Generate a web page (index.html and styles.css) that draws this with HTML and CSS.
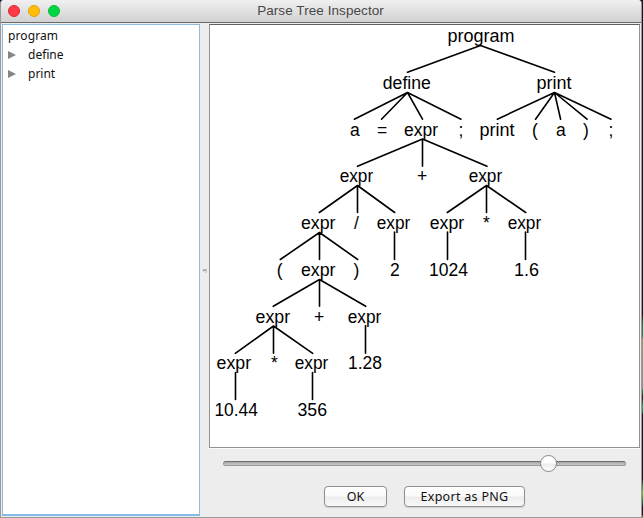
FILE: index.html
```html
<!DOCTYPE html>
<html lang="en">
<head>
<meta charset="utf-8">
<title>Parse Tree Inspector</title>
<link rel="stylesheet" href="styles.css">
</head>
<body>
<div class="window">
  <header class="titlebar">
    <div class="lights"><i class="light close"></i><i class="light minimize"></i><i class="light zoom"></i></div>
    <h1 class="title">Parse Tree Inspector</h1>
  </header>
  <main class="content">
    <nav class="outline">
      <div class="row root">program</div>
      <div class="row"><i class="arrow"></i><span>define</span></div>
      <div class="row"><i class="arrow"></i><span>print</span></div>
    </nav>
    <div class="divider"><svg width="6" height="6" viewBox="0 0 6 6"><path d="M1 3Q1.5 1.5 4.5 2" fill="none" stroke="#888" stroke-width="1.3"/><path d="M3 4.5L5 3.5" stroke="#bbb"/></svg></div>
    <section class="side">
      <div class="canvas">
        <svg width="429" height="421" viewBox="210 26 429 421">
          <g class="edges">
            <path d="M407.5 72.2L480.5 45.5L554.5 72.2"/>
            <path d="M354.3 119.2L407.5 92.5L381.5 119.2M407.5 92.5L422.5 119.2M407.5 92.5L461 119.2"/>
            <path d="M497.3 119.2L554.5 92.5L535.5 119.2M554.5 92.5L560.6 119.2M554.5 92.5L587 119.2M554.5 92.5L611 119.2"/>
            <path d="M357.5 166.3L422.5 139V166.3M422.5 139L487 166.3"/>
            <path d="M319.3 212.5L357.5 185.5V212.5M357.5 185.5L394.7 212.5"/>
            <path d="M447.3 212.5L486.5 185.5V212.5M486.5 185.5L525.7 212.5"/>
            <path d="M280.3 259.5L319.5 232.5V259.5M319.5 232.5L357.7 259.5M394.5 232V259.5M447.5 232V259.5M525.5 232V259.5"/>
            <path d="M273.3 306.3L319.5 279.5V306.3M319.5 279.5L365.7 306.3"/>
            <path d="M235.3 353.3L273.5 326V353.3M273.5 326L312.7 353.3M365.5 325.5V353.3M235.5 372.5V399.5M312.5 372.5V399.5"/>
          </g>
          <g class="labels">
            <text x="447.4" y="42" textLength="67" lengthAdjust="spacingAndGlyphs">program</text>
            <text x="382.8" y="89" textLength="48" lengthAdjust="spacingAndGlyphs">define</text>
            <text x="536.5" y="89" textLength="35" lengthAdjust="spacingAndGlyphs">print</text>
            <text x="350" y="136">a</text>
            <text x="377" y="136">=</text>
            <text x="404" y="136" textLength="34" lengthAdjust="spacingAndGlyphs">expr</text>
            <text x="458.4" y="136">;</text>
            <text x="479.5" y="136" textLength="35" lengthAdjust="spacingAndGlyphs">print</text>
            <text x="532" y="136">(</text>
            <text x="556" y="136">a</text>
            <text x="583" y="136">)</text>
            <text x="608.5" y="136">;</text>
            <text x="339.7" y="182" textLength="33.5" lengthAdjust="spacingAndGlyphs">expr</text>
            <text x="417" y="182">+</text>
            <text x="468.7" y="182" textLength="33.5" lengthAdjust="spacingAndGlyphs">expr</text>
            <text x="301" y="229" textLength="34.5" lengthAdjust="spacingAndGlyphs">expr</text>
            <text x="354" y="229">/</text>
            <text x="376.8" y="229" textLength="33.5" lengthAdjust="spacingAndGlyphs">expr</text>
            <text x="429.7" y="229" textLength="34.5" lengthAdjust="spacingAndGlyphs">expr</text>
            <text x="483" y="229">*</text>
            <text x="507.7" y="229" textLength="33.5" lengthAdjust="spacingAndGlyphs">expr</text>
            <text x="276.8" y="276">(</text>
            <text x="301" y="276" textLength="34.5" lengthAdjust="spacingAndGlyphs">expr</text>
            <text x="353.5" y="276">)</text>
            <text x="390" y="276">2</text>
            <text x="429" y="276" textLength="39" lengthAdjust="spacingAndGlyphs">1024</text>
            <text x="514" y="276" textLength="25" lengthAdjust="spacingAndGlyphs">1.6</text>
            <text x="255.6" y="323" textLength="34.5" lengthAdjust="spacingAndGlyphs">expr</text>
            <text x="314" y="323">+</text>
            <text x="347.8" y="323" textLength="33.5" lengthAdjust="spacingAndGlyphs">expr</text>
            <text x="216.6" y="369" textLength="34.5" lengthAdjust="spacingAndGlyphs">expr</text>
            <text x="271" y="369">*</text>
            <text x="294.8" y="369" textLength="33.5" lengthAdjust="spacingAndGlyphs">expr</text>
            <text x="348" y="369" textLength="34" lengthAdjust="spacingAndGlyphs">1.28</text>
            <text x="214.4" y="416" textLength="43.5" lengthAdjust="spacingAndGlyphs">10.44</text>
            <text x="297.5" y="416" textLength="29.5" lengthAdjust="spacingAndGlyphs">356</text>
          </g>
        </svg>
      </div>
      <div class="slider"><i class="knob"></i></div>
      <div class="buttons"><button class="ok">OK</button><button class="export">Export as PNG</button></div>
    </section>
  </main>
</div>
<div class="desktop"></div>
</body>
</html>
```
FILE: styles.css
```css
* { box-sizing: border-box; }
body {
  margin: 0;
  width: 643px;
  height: 518px;
  display: flex;
  overflow: hidden;
  background: #1b1724;
  font: 12px "Noto Sans", "Open Sans", sans-serif;
  color: #111;
}
.window {
  width: 642px;
  height: 518px;
  display: flex;
  flex-direction: column;
  background: #ededed;
  border: solid #999;
  border-width: 0 1px 1px;
  border-radius: 4px 4px 0 0;
  overflow: hidden;
}
.titlebar {
  height: 23px;
  flex: none;
  display: grid;
  grid-template-columns: 70px 1fr 71px;
  align-items: center;
  background: linear-gradient(#f0f0f0, #d1d1d1);
  border-bottom: 1px solid #696969;
}
.lights { display: flex; gap: 8px; padding-left: 7px; }
.light { width: 12px; height: 12px; border-radius: 50%; border: 1px solid; }
.close { background: #ff3b47; border-color: #e02735; }
.minimize { background: #ffbd08; border-color: #e2a20d; }
.zoom { background: #00d742; border-color: #10b935; }
.title {
  margin: 0;
  text-align: center;
  font: 13.5px/22px "Liberation Sans", Arial, sans-serif;
  letter-spacing: .07px;
  color: #484848;
}
.content { display: flex; height: 494px; padding: 1px 1px 0; }
.outline {
  width: 198px;
  height: 492px;
  background: #fff;
  border: 1px solid #8bbce3;
  border-bottom: 2px solid #83bce8;
  padding: 1px 0 0 5px;
}
.row { height: 19px; display: flex; align-items: center; }
.root { letter-spacing: .1px; }
.arrow {
  width: 0;
  height: 0;
  border: solid transparent;
  border-width: 4.5px 0 4.5px 8px;
  border-left-color: #858585;
  margin-right: 12px;
}
.divider { width: 9px; display: flex; align-items: center; justify-content: center; }
.side { width: 431px; }
.canvas {
  height: 424px;
  background: #fff;
  border: 1px solid #929292;
  border-top: 1px solid #606060;
  box-shadow: 0 1px #fafafa;
}
.canvas svg { display: block; margin-top: 1px; }
.edges { fill: none; stroke: #000; stroke-width: 1.6; stroke-linecap: round; stroke-linejoin: round; }
.labels { font: 17.5px "Liberation Sans", Arial, sans-serif; fill: #000; }
.slider {
  display: flex;
  align-items: center;
  width: 403px;
  height: 5px;
  margin: 13px 0 0 14px;
  border: 1px solid #999;
  border-top-color: #6e6e6e;
  border-radius: 2.5px;
  background: linear-gradient(#a6a6a6, #c8c8c8);
}
.knob {
  flex: none;
  width: 17px;
  height: 17px;
  margin-left: 316px;
  border: 1px solid #888;
  border-radius: 50%;
  background: linear-gradient(#fff 45%, #ededed 55%, #fff);
}
.buttons { display: flex; gap: 17px; margin: 20px 0 0 115px; }
button {
  height: 21px;
  padding: 0;
  border: 1px solid #8f8f8f;
  border-radius: 4px;
  background: linear-gradient(#fff 0, #fafafa 45%, #ededed 55%, #f8f8f8);
  box-shadow: 0 1px 1px #cfcfcf;
  font: inherit;
  font-size: 12.5px;
  line-height: 18px;
  color: #111;
}
.ok { width: 63px; }
.export { width: 121px; letter-spacing: .3px; }
.desktop {
  width: 1px;
  height: 518px;
  background: linear-gradient(#17121f 0 315px, #087a3c 322px, #08904c 335px, #9a9a70 340px, #92948a 387px, #168a48 391px, #12261c 398px, #16a36e 406px, #0d7c52 412px, #17121f 415px 478px, #258b42 486px, #65c82c 493px, #167447 502px, #18141f 507px 514px, #8ba07a 518px);
}
```
